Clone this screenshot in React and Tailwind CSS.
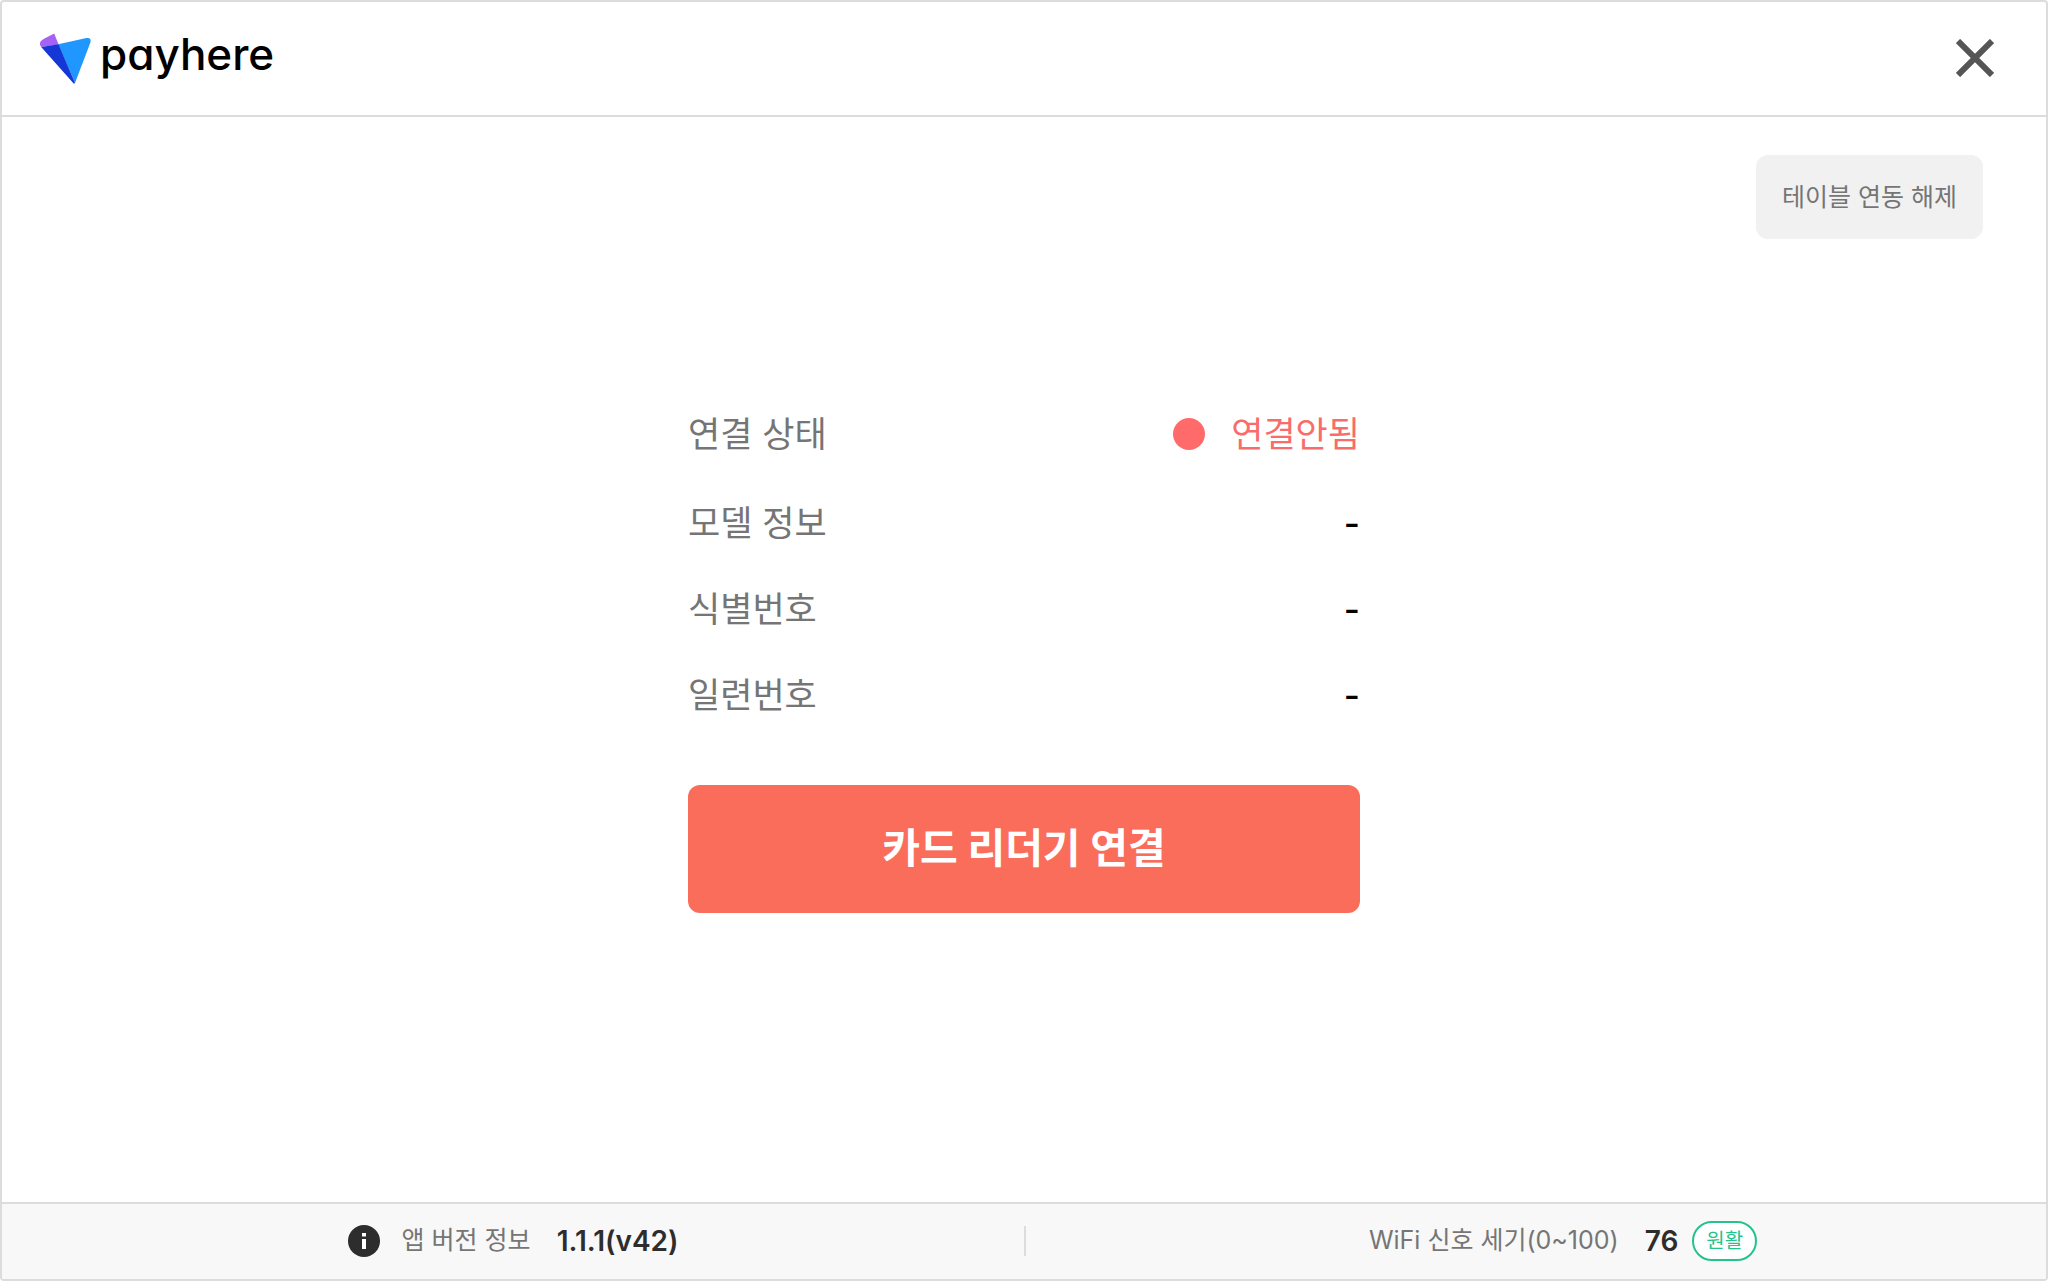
const DEVICE_INFO = [
  { label: '모델 정보', value: '-' },
  { label: '식별번호', value: '-' },
  { label: '일련번호', value: '-' },
];

function Logo() {
  return (
    <a href="#" className="flex items-start" aria-label="payhere">
      <svg width="52" height="52" viewBox="0 0 52 52" aria-hidden="true">
        <path d="M3.5 7 14.2 1.4 18.6 12.4 1.2 15Q-2.4 10.3 3.5 7Z" fill="#a463f5" />
        <path d="M18.2 12.2 46.5 6Q52 5.4 50.3 10.8L35 51Z" fill="#1f97ff" />
        <path d="M1.2 15 18.5 12.2 35 51Q34 52 33.2 51Z" fill="#1437d6" />
      </svg>
      <span className="ml-2 text-[44px] leading-[44px] font-medium text-black [font-feature-settings:'cv11']">
        payhere
      </span>
    </a>
  );
}

function Header() {
  return (
    <header className="flex h-[115px] items-center justify-between border-b-2 border-[#dcdcdc] pb-0.5 pl-[38px] pr-[52px]">
      <Logo />
      <button type="button" aria-label="닫기" className="cursor-pointer">
        <svg width="38" height="38" viewBox="0 0 38 38" stroke="#555" strokeWidth="6" aria-hidden="true">
          <path d="M2 2 36 36M36 2 2 36" />
        </svg>
      </button>
    </header>
  );
}

function ReaderStatus() {
  return (
    <section className="w-full max-w-[672px]">
      <dl className="flex flex-col gap-[42px] text-[35px] leading-[44px]">
        <div className="flex h-[50px] items-center justify-between">
          <dt className="text-[#757575]">연결 상태</dt>
          <dd className="flex items-center gap-[26px] text-[#f96c6c]">
            <span className="size-8 rounded-full bg-[#ff6b6b]" />
            연결안됨
          </dd>
        </div>
        {DEVICE_INFO.map(({ label, value }) => (
          <div key={label} className="flex items-center justify-between">
            <dt className="text-[#757575]">{label}</dt>
            <dd className="font-medium text-black">{value}</dd>
          </div>
        ))}
      </dl>
      <button
        type="button"
        className="mt-[68px] h-32 w-full cursor-pointer rounded-xl bg-[#fa6d5b] text-[41px] font-bold text-white"
      >
        카드 리더기 연결
      </button>
    </section>
  );
}

function Footer() {
  return (
    <footer className="grid h-[77px] grid-cols-2 items-center border-t-2 border-[#dcdcdc] bg-[#f8f8f8] pb-0.5 text-[25px] text-[#757575]">
      <div className="flex items-center justify-center">
        <svg width="32" height="32" viewBox="0 0 32 32" aria-hidden="true">
          <circle cx="16" cy="16" r="16" fill="#2d2d2d" />
          <path d="M14 8h4v3.6h-4zM14 14h4v10h-4z" fill="#fff" />
        </svg>
        <span className="ml-[22px]">앱 버전 정보</span>
        <strong className="ml-[26px] text-[28px] font-semibold text-[#2d2d2d]">1.1.1(v42)</strong>
      </div>
      <div className="flex items-center">
        <span className="h-[30px] w-0.5 bg-[#dcdcdc]" />
        <div className="flex flex-1 items-center justify-center pl-[54px]">
          <span>WiFi 신호 세기(0~100)</span>
          <strong className="ml-[26px] text-[28px] font-semibold text-[#2d2d2d]">76</strong>
          <span className="ml-3.5 flex h-10 items-center rounded-full border-2 border-[#25c38c] bg-white px-3 text-[20px] text-[#25c38c]">
            원활
          </span>
        </div>
      </div>
    </footer>
  );
}

export default function App() {
  return (
    <div className="flex min-h-screen flex-col rounded-sm border-2 border-[#dcdcdc] bg-white font-['Inter','Noto_Sans_CJK_KR',sans-serif]">
      <Header />
      <main className="grid flex-1">
        <button
          type="button"
          className="col-start-1 row-start-1 mt-[38px] mr-[63px] h-[84px] cursor-pointer self-start justify-self-end rounded-xl bg-[#f1f1f1] px-[26px] pt-0.5 text-[25px] text-[#757575]"
        >
          테이블 연동 해제
        </button>
        <div className="col-start-1 row-start-1 flex w-full max-w-[672px] items-center place-self-center pt-0.5">
          <ReaderStatus />
        </div>
      </main>
      <Footer />
    </div>
  );
}
